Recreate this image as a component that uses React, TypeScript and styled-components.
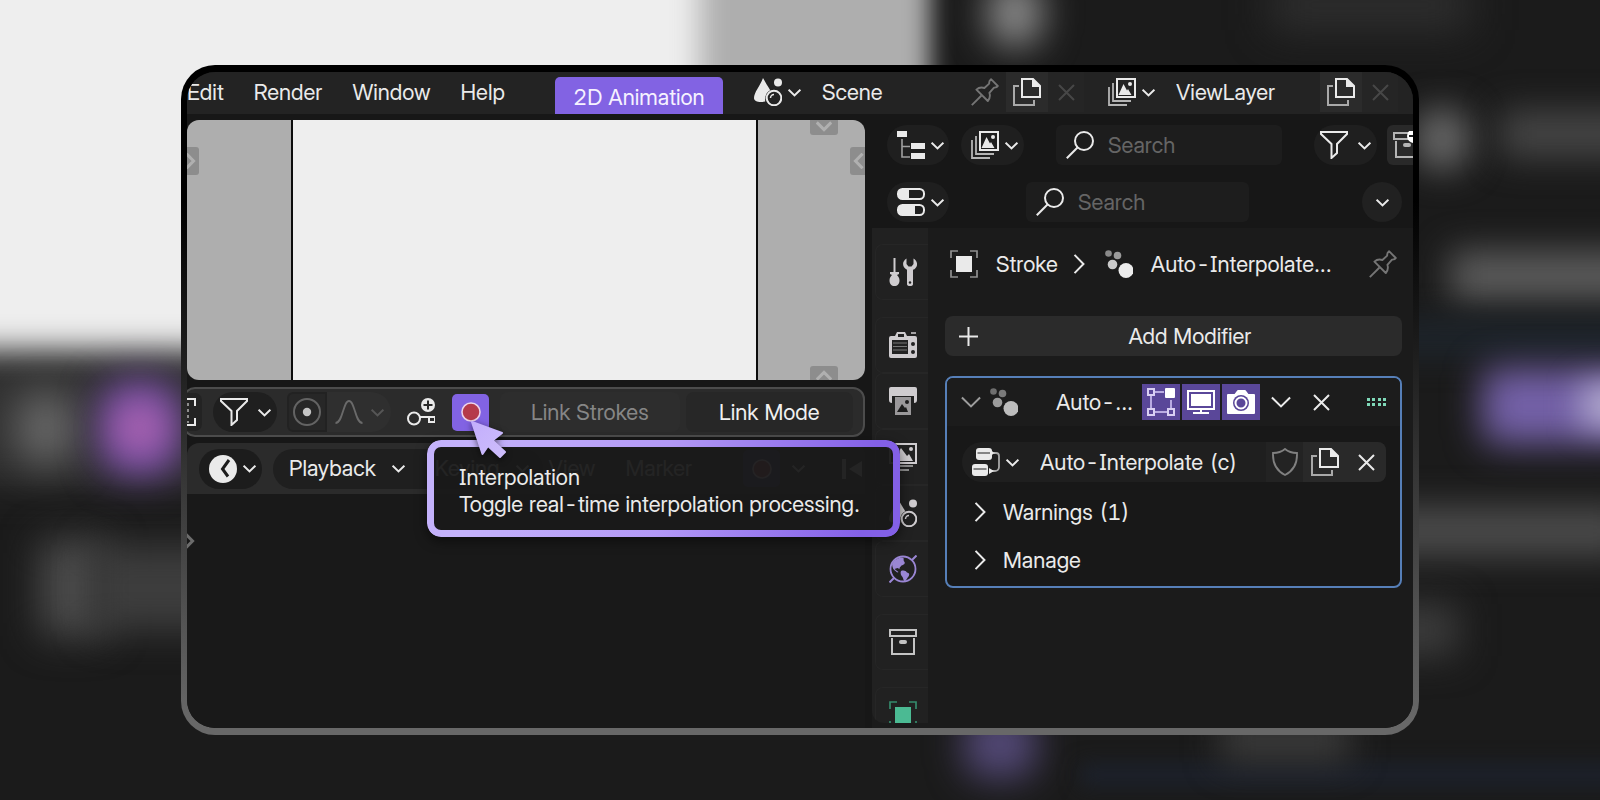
import React from "react";
import styled, { createGlobalStyle, css } from "styled-components";

const GlobalStyle = createGlobalStyle`
  *, *::before, *::after { box-sizing: border-box; }
  body {
    margin: 0;
    background: #1a1a1a;
    color: #eaeaea;
    font: 400 22px/27px "Inter Display", Inter, "Liberation Sans", sans-serif;
    font-feature-settings: "tnum", "cv08";
  }
  button, input { font: inherit; font-feature-settings: inherit; color: inherit; }
  button { margin: 0; padding: 0; border: 0; background: none; cursor: pointer; white-space: nowrap; }
  svg { display: block; flex: none; }
`;

/* ---------- Stage and blurred backdrop ---------- */

const Stage = styled.main`
  position: relative;
  isolation: isolate;
  display: flex;
  min-height: 100vh;
  padding: 65px 181px;
  overflow: hidden;
`;

const Backdrop = styled.div`
  position: absolute;
  inset: 0;
  z-index: -1;
  background: #1b1b1b;
`;

interface BlobProps {
  $x: number;
  $y: number;
  $w: number;
  $h: number;
  $color: string;
  $blur?: number;
  $round?: number;
}

const Blob = styled.div<BlobProps>`
  position: absolute;
  left: ${(p) => p.$x}px;
  top: ${(p) => p.$y}px;
  width: ${(p) => p.$w}px;
  height: ${(p) => p.$h}px;
  border-radius: ${(p) => p.$round ?? 0}px;
  background: ${(p) => p.$color};
  filter: blur(${(p) => p.$blur ?? 18}px);
`;

const Frame = styled.div`
  display: flex;
  flex: 1;
  min-width: 0;
  padding: 7px 6px;
  border-radius: 34px;
  background: linear-gradient(#000 0%, #000 20%, #1c1c1c 42%, #444 72%, #686868 98%);
`;

const AppWindow = styled.div`
  display: flex;
  flex: 1;
  flex-direction: column;
  gap: 6px;
  min-width: 0;
  border-radius: 28px;
  overflow: hidden;
  background: #171717;
`;

/* ---------- Top bar ---------- */

const TopBar = styled.header`
  display: flex;
  align-items: flex-start;
  height: 42px;
  padding-right: 15px;
  background: #232323;
`;

const MenuBar = styled.nav`
  display: flex;
  gap: 30px;
  height: 40px;
  align-items: center;
`;

const WorkspaceTab = styled.button`
  align-self: flex-end;
  width: 168px;
  height: 37px;
  margin: 0 31px 0 50px;
  border-radius: 5px 5px 0 0;
  background: #8263e3;
  color: #f6f2ff;
  padding-top: 3px;
`;

const IdSelector = styled.div<{ $grow?: boolean }>`
  display: flex;
  align-items: center;
  height: 40px;
  flex: ${(p) => (p.$grow ? "1 1 0" : "none")};
  margin-left: ${(p) => (p.$grow ? 0 : 24)}px;
  min-width: 0;
`;

const NameInput = styled.input`
  flex: 1 1 0;
  width: 144px;
  min-width: 0;
  margin-left: 21px;
  padding: 0;
  border: 0;
  outline: 0;
  background: none;
`;

const IconButton = styled.button<{ $w?: number; $bg?: string }>`
  display: flex;
  align-items: center;
  justify-content: center;
  flex: none;
  align-self: stretch;
  width: ${(p) => p.$w ?? 40}px;
  background: ${(p) => p.$bg ?? "none"};
`;

const PinControl = styled(IconButton)`
  color: #757575;
`;

const DisabledClose = styled(IconButton)`
  background: #252525;
  color: #474747;
`;

const DropButton = styled.button<{ $bg?: string; $w?: number; $gap?: number }>`
  display: flex;
  align-items: center;
  justify-content: center;
  gap: ${(p) => p.$gap ?? 6}px;
  flex: none;
  width: ${(p) => (p.$w ? `${p.$w}px` : "auto")};
  height: 40px;
  padding-left: ${(p) => (p.$w && !p.$gap ? 4 : 0)}px;
  border-radius: 20px;
  background: ${(p) => p.$bg ?? "none"};
`;

/* ---------- Editors ---------- */

const Workspace = styled.div`
  display: grid;
  grid-template-columns: minmax(0, 685fr) minmax(0, 541fr);
  flex: 1;
`;

const LeftPane = styled.section`
  display: flex;
  flex-direction: column;
  padding-right: 7px;
`;

const Viewport = styled.div`
  position: relative;
  display: grid;
  grid-template-columns: 104fr 467fr 107fr;
  height: 260px;
  border-radius: 12px;
  overflow: hidden;
  background: #aeaeae;
`;

const Canvas = styled.div`
  grid-column: 2;
  border: solid #0c0c0c;
  border-width: 0 2px;
  background: #eee;
`;

const handlePlaces = {
  left: css`left: -16px; top: 27px; padding-left: 10px;`,
  right: css`right: -13px; top: 27px; padding-right: 10px;`,
  top: css`right: 27px; top: -13px; padding-top: 9px;`,
  bottom: css`right: 27px; bottom: -14px; padding-bottom: 8px;`,
};

const RegionHandle = styled.button<{ $place: keyof typeof handlePlaces }>`
  position: absolute;
  display: flex;
  align-items: center;
  justify-content: center;
  width: 28px;
  height: 28px;
  border-radius: 3px;
  background: #8d8d8d;
  color: #b0b0b0;
  ${(p) => handlePlaces[p.$place]}
`;

const ToolHeader = styled.div`
  display: flex;
  align-items: center;
  height: 50px;
  margin: 7px 0 6px -4px;
  padding-right: 10px;
  border: 2px solid #4c4c4c;
  border-radius: 12px;
  background: #2b2b2b;
`;

const ClippedTool = styled.button`
  display: flex;
  justify-content: flex-end;
  align-items: center;
  width: 17px;
  height: 38px;
  margin-right: 11px;
  padding-right: 6px;
  overflow: hidden;
  border-radius: 0 7px 7px 0;
  background: #232323;
`;

const ToggleGroup = styled.div`
  display: flex;
  height: 40px;
  margin: 0 8px 0 10px;
  border-radius: 6px 20px 20px 6px;
  background: #2f2f2f;
  color: #565656;
`;

const FalloffToggle = styled.button`
  display: flex;
  align-items: center;
  justify-content: center;
  width: 40px;
  border: 2px solid #222;
  border-radius: 6px 0 0 6px;
  background: #272727;
`;

const RecordAnchor = styled.div`
  position: relative;
  z-index: 5;
  margin: 0 11px 0 10px;
`;

const RecordButton = styled.button`
  display: flex;
  align-items: center;
  justify-content: center;
  width: 37px;
  height: 37px;
  border-radius: 5px;
  background: #8263e3;
`;

const LinkButton = styled.button<{ $grow: number; $muted?: boolean }>`
  flex: ${(p) => p.$grow} 1 0;
  height: 40px;
  margin-left: ${(p) => (p.$muted ? 0 : 6)}px;
  border-radius: 8px;
  color: ${(p) => (p.$muted ? "#868686" : "#f0f0f0")};
  background: ${(p) => (p.$muted ? "#2d2d2d" : "#272727")};
`;

const Tooltip = styled.div`
  position: absolute;
  left: -25px;
  top: 46px;
  width: 473px;
  padding: 24px 30px 19px 32px;
  border-radius: 14px;
  background: rgba(25, 25, 25, 0.95);
  box-shadow: 0 4px 12px rgba(0, 0, 0, 0.5);
  white-space: nowrap;

  &::before {
    content: "";
    position: absolute;
    inset: 0;
    padding: 7px;
    border-radius: inherit;
    background: linear-gradient(100deg, #c4b2fb 10%, #b399f6 50%, #8360e6 92%);
    mask: linear-gradient(#000 0 0) content-box exclude, linear-gradient(#000 0 0);
  }
  p { margin: 0; }
`;

const Cursor = styled.svg`
  position: absolute;
  left: 15px;
  top: 24px;
  filter: drop-shadow(0 2px 3px rgba(0, 0, 0, 0.55));
  pointer-events: none;
`;

const TimelineHeader = styled.div`
  display: flex;
  align-items: center;
  height: 51px;
  padding-left: 12px;
  border-radius: 12px 12px 0 0;
  background: #2b2b2b;
`;

const MenuPill = styled.div`
  display: flex;
  margin-left: 11px;
  border-radius: 20px;
  background: #1f1f1f;
`;

const PillMenu = styled.button`
  display: flex;
  align-items: center;
  gap: 16px;
  height: 40px;
  padding: 0 14px 0 16px;
`;

const PlainMenus = styled.div`
  display: flex;
  flex: 1;
  gap: 30px;
  margin-left: 6px;
`;

const Transport = styled.div`
  display: flex;
  align-items: center;
  gap: 12px;
  margin-right: 2px;
`;

const KeyToggle = styled(RecordButton)`
  background: #463d78;
`;

const JumpStart = styled.button`
  margin-left: 25px;
`;

const Timeline = styled.div`
  flex: 1;
  padding-top: 34px;
  background: #191919;
  color: #6c6c6c;
`;

const ExpandButton = styled.button`
  margin-left: -6px;
`;

/* ---------- Outliner and properties ---------- */

const RightPane = styled.section`
  display: flex;
  flex-direction: column;
  min-width: 0;
`;

const EditorHeader = styled.div`
  display: flex;
  align-items: center;
  height: 50px;
  margin-bottom: 7px;
  padding: 0 11px 0 15px;
  &:nth-child(2) { margin-bottom: 1px; }
`;

const SearchField = styled.label<{ $gap: [number, number]; $width?: number }>`
  display: flex;
  align-items: center;
  gap: 14px;
  flex: ${(p) => (p.$width ? `0 1 ${p.$width}px` : "1 1 0")};
  min-width: 0;
  height: 40px;
  margin: 0 ${(p) => p.$gap[1]}px 0 ${(p) => p.$gap[0]}px;
  padding-left: 10px;
  border-radius: 6px;
  background: #1d1d1d;

  input {
    flex: 1;
    min-width: 0;
    padding: 0;
    border: 0;
    outline: 0;
    background: none;
  }
  input::placeholder { color: #656565; opacity: 1; }
`;

const NewCollection = styled(IconButton)`
  height: 40px;
  align-self: center;
  margin: 0 -25px 0 10px;
  border-radius: 6px;
  color: #b4b4b4;
`;

const OptionsButton = styled(IconButton)`
  height: 40px;
  align-self: center;
  margin-left: auto;
  border-radius: 20px;
`;

const DisplayMode = styled(DropButton)`
  margin-left: 12px;
`;

const Properties = styled.div`
  display: flex;
  flex: 1;
  background: #1b1b1b;
`;

const TabRail = styled.nav`
  display: flex;
  flex-direction: column;
  width: 56px;
  height: 495px;
  padding: 16px 0 0 3px;
  overflow: hidden;
  border-radius: 0 0 0 12px;
  background: #212121;
`;

const RailTab = styled.button<{ $apart?: boolean; $color?: string }>`
  flex: none;
  display: flex;
  align-items: center;
  height: 56px;
  padding-left: 13px;
  margin-top: ${(p) => (p.$apart ? 17 : 0)}px;
  border: 1px solid #262626;
  border-right: 0;
  border-radius: 8px 0 0 8px;
  color: ${(p) => p.$color ?? "#cfcccf"};
`;

const PropertyBody = styled.div`
  flex: 1;
  min-width: 0;
  padding: 16px 11px 0 17px;
`;

const Breadcrumb = styled.div`
  display: flex;
  align-items: center;
  height: 40px;
  padding: 0 5px;
`;

const Crumb = styled.span`
  display: flex;
  align-items: center;
  gap: 18px;
`;

const CrumbArrow = styled.span`
  padding: 0 16px 0 11px;
`;

const PinButton = styled.button`
  margin-left: auto;
  color: #757575;
`;

const AddModifier = styled.button`
  display: flex;
  align-items: center;
  width: 100%;
  height: 40px;
  margin: 32px 0 20px;
  padding-left: 14px;
  border-radius: 8px;
  background: #2b2b2b;

  span { flex: 1; }
`;

const ModifierPanel = styled.article`
  border: 2px solid #567fb8;
  border-radius: 8px;
  background: #181818;
  overflow: hidden;
`;

const ModifierHeader = styled.div`
  display: flex;
  align-items: center;
  height: 48px;
  padding: 0 14px 0 14px;
  background: #1c1c1c;
`;

const CollapseButton = styled.button`
  margin-right: 9px;
  color: #9c9c9c;
`;

const ModifierName = styled.span`
  flex: 1;
  min-width: 0;
  margin-left: 38px;
`;

const ModeButtons = styled.div`
  display: flex;
  gap: 2px;
`;

const ModeButton = styled.button`
  display: flex;
  align-items: center;
  justify-content: center;
  width: 38px;
  height: 36px;
  background: #5a4799;
  color: #fff;
`;

const GripButton = styled.button`
  margin-left: 25px;
`;

const NodeGroup = styled.div`
  display: flex;
  align-items: center;
  height: 40px;
  margin: 16px 14px 10px 15px;
  border-radius: 20px 8px 8px 20px;
  overflow: hidden;
  background: #1f1f1f;
`;

const NodeName = styled(NameInput)`
  margin-left: 16px;
`;

const SubPanel = styled.button`
  display: flex;
  align-items: center;
  gap: 13px;
  width: 100%;
  height: 40px;
  padding-left: 23px;
  margin-bottom: 8px;
  &:last-child { margin-bottom: 6px; }
`;

/* ---------- Icons, drawn on a 28px grid ---------- */

type Dir = "down" | "up" | "left" | "right";

const turns: Record<Dir, number> = { down: 0, left: 90, up: 180, right: 270 };

function Chevron({ dir = "down", size = 13, weight = 2 }: { dir?: Dir; size?: number; weight?: number }) {
  return (
    <svg width={size} height={size} viewBox="0 0 13 13" fill="none" stroke="currentColor" strokeWidth={(weight * 13) / size} aria-hidden>
      <path d="M.6 3.6 6.5 9.4l5.900-5.800" transform={`rotate(${turns[dir]} 6.5 6.5)`} />
    </svg>
  );
}

function Icon({ children, color = "currentColor", size = 28 }: { children: React.ReactNode; color?: string; size?: number }) {
  return (
    <svg width={size} height={size} viewBox="0 0 28 28" fill="none" stroke={color} strokeWidth="2" color={color} aria-hidden>
      {children}
    </svg>
  );
}

const SceneIcon = () => (
  <Icon>
    <path d="M9 0c2.500 4.500 5 8.500 7.200 12.200C12.600 14 10.800 17.500 11.200 23.500 6 24.500 0 24 0 20 0 14.500 6 8 9 0Z" fill="currentColor" stroke="none" />
    <circle cx="24" cy="4.500" r="4" fill="currentColor" stroke="none" />
    <circle cx="20" cy="20" r="7.300" />
    <path d="M16.500 20a3.500 3.500 0 0 1 3.500-3.500" strokeWidth="1.500" />
  </Icon>
);

const PinIcon = () => (
  <Icon>
    <path d="M20 1.200 26.800 8c-.8 1.600-2.300 1.700-3.800 1.600l-4.600 5.200c1 3.200.4 6-1.600 8.200L5.400 11.600c2.200-2 5-2.600 8-1.600l4.800-4.400c-.2-1.600.2-3.200 1.800-4.400Z" strokeWidth="1.900" strokeLinejoin="round" />
    <path d="M10.500 17.500.8 27.200" strokeWidth="1.900" />
  </Icon>
);

const CopyIcon = () => (
  <Icon>
    <path d="M6 8H1v19h20v-5" stroke="#a9a9a9" />
    <path d="M9 1h11l7 7v11H9Z" />
    <path d="M19 0v9h9Z" fill="currentColor" stroke="none" />
  </Icon>
);

const CloseIcon = () => (
  <svg width="17" height="17" viewBox="0 0 17 17" stroke="currentColor" strokeWidth="2" aria-hidden>
    <path d="m1 1 15 15M16 1 1 16" />
  </svg>
);

const ImagesIcon = () => (
  <Icon>
    <path d="M1 9v18h18M5 5v18h18" stroke="#b5b5b5" strokeWidth="1.800" />
    <path d="M9 1h18v18H9Z" />
    <path d="m10.500 17 5-11L19 12.500l1-1.500 3.500 6Z" fill="currentColor" stroke="none" />
    <circle cx="22" cy="6" r="2" fill="currentColor" stroke="none" />
  </Icon>
);

const OutlinerIcon = () => (
  <Icon>
    <path d="M5 8v18h8M5 15.500h8" stroke="#a0a0a0" strokeWidth="1.600" />
    <path d="M0 0h10v6H0ZM14 12h14v6H14ZM14 22h14v6H14Z" fill="currentColor" stroke="none" />
  </Icon>
);

const PropertiesIcon = () => (
  <Icon>
    <rect x="1" y="1" width="26" height="10" rx="4.500" />
    <rect x="1" y="17" width="26" height="10" rx="4.500" />
    <path d="M5 1h7v10H5a4 4 0 0 1-4-4V5a4 4 0 0 1 4-4ZM5 17h13v10H5a4 4 0 0 1-4-4v-2a4 4 0 0 1 4-4Z" fill="currentColor" stroke="none" />
  </Icon>
);

const SearchIcon = () => (
  <Icon>
    <circle cx="18" cy="10" r="9" />
    <path d="M11.500 16.500.8 27.200" />
  </Icon>
);

const FilterIcon = () => (
  <Icon>
    <path d="M1 1h26v2L17 13v9l-5.500 5V13L1 3Z" />
  </Icon>
);

const ArchiveIcon = ({ plus }: { plus?: boolean }) => (
  <Icon>
    <path d="M1 2h26v6H1Z" />
    <path d="M3 10v16h22V10" />
    <rect x="10" y="12" width="8" height="4" rx="2" fill="currentColor" stroke="none" />
    {plus && <circle cx="21" cy="5" r="7" fill="#fff" stroke="none" />}
    {plus && <path d="M16 5h10M21 0v10" stroke="#222" />}
  </Icon>
);

const ToolIcon = () => (
  <Icon>
    <path d="M5.500 0v14" />
    <path d="M1 14h9v2l-2 1c1.500 1.500 2.500 3 2.500 5.500 0 3.500-2 5.500-5 5.500s-5-2-5-5.500c0-2.500 1-4 2.500-5.500l-2-1Z" fill="currentColor" stroke="none" />
    <path d="M17.500.5c-6 4-3 10 .5 11.200V26c0 1.500 1 2 3 2s3-.5 3-2V11.700c4-1.200 6.500-7.200.5-11.200V6l-2 2.500h-3L17.500 6Z" fill="currentColor" stroke="none" />
    <circle cx="21" cy="24.500" r="1.200" fill="#222" stroke="none" />
  </Icon>
);

const RenderIcon = () => (
  <Icon>
    <path d="M2 5h4l2-4h8l2 4h8a2 2 0 0 1 2 2v18a2 2 0 0 1-2 2H2a2 2 0 0 1-2-2V7a2 2 0 0 1 2-2Z" fill="currentColor" stroke="none" />
    <path d="M22 2h5" strokeWidth="1.500" />
    <path d="M9 3h6v3H9ZM3 9h16v14H3Z" fill="#222" stroke="none" />
    <path d="M4 12h14M4 15.500h14M4 19h14" stroke="#777" strokeWidth="1" />
    <circle cx="24" cy="13" r="2" fill="#222" stroke="none" />
    <circle cx="24" cy="21" r="2" fill="#222" stroke="none" />
  </Icon>
);

const OutputIcon = () => (
  <Icon>
    <path d="M2 0h24a2 2 0 0 1 2 2v11c0 2-1 3-3 3V9H3v7c-2 0-3-1-3-3V2a2 2 0 0 1 2-2Z" fill="currentColor" stroke="none" />
    <path d="M6 10h16v18H6Z" fill="#9a989a" stroke="none" />
    <path d="m8 25 5-8 3 4 1-1 2 5Z" fill="#1c1c1c" stroke="none" />
    <circle cx="18" cy="15" r="2" fill="#1c1c1c" stroke="none" />
  </Icon>
);

const ViewLayerIcon = () => (
  <Icon>
    <path d="M1 1h26v19H1Z" />
    <path d="m4 18 8-13 6 8 2-2 4 7Z" fill="currentColor" stroke="none" />
    <circle cx="22" cy="6" r="2" fill="currentColor" stroke="none" />
    <path d="M5 23h19M8 27h12" stroke="#b0b0b0" strokeWidth="1.600" />
  </Icon>
);

const WorldIcon = () => (
  <Icon>
    <circle cx="14" cy="14" r="12.500" strokeWidth="1.800" />
    <path d="M.5 27.500 5 23M23 5 27.500.5" />
    <path d="M3 9c3-6 9-7 11.500-6 .5 1.500-.5 2.500 1 4 1 1.500-1 3-3 3.500-1 1.500-2 1.500-2 3.500l-2-1-3 1 4 3c-1 1-2 0-3-1-2-1-3-3-3.500-7ZM12 16c3-1 5 0 6 1.500 2 .5 3 1.500 1.500 4-1.500 1.500-2 3.500-3.500 5-2-1-1.500-3-2.500-4.500C12 20.500 11 18 12 16Z" fill="currentColor" stroke="none" />
  </Icon>
);

const ObjectIcon = ({ corner = "#8f8f8f" }: { corner?: string }) => (
  <Icon>
    <path d="M1 8V1h7M20 1h7v7M27 20v7h-7M8 27H1v-7" stroke={corner} strokeWidth="1.700" />
    <rect x="6" y="6" width="16" height="16" fill="currentColor" stroke="none" />
  </Icon>
);

const ParticlesIcon = ({ dim }: { dim?: boolean }) => (
  <Icon>
    <g stroke="none">
      <circle cx="3.500" cy="3.500" r="3.300" fill={dim ? "#6e6e6e" : "#8a8a8a"} />
      <circle cx="12.500" cy="5.500" r="3.800" fill={dim ? "#7a7a7a" : "#9a9a9a"} />
      <circle cx="7.500" cy="14.500" r="4.800" fill={dim ? "#9c9c9c" : "#cacaca"} />
      <circle cx="21" cy="20.500" r="7.500" fill={dim ? "#bdbdbd" : "#ececec"} />
    </g>
  </Icon>
);

const NodeTreeIcon = () => (
  <Icon>
    <rect x="4" y="0" width="16" height="12" rx="3" fill="currentColor" stroke="none" />
    <rect x="0" y="16" width="16" height="12" rx="3" fill="currentColor" stroke="none" />
    <path d="M5.500 5h13M1.500 21h13" stroke="#1f1f1f" strokeWidth="1" />
    <path d="M22 5h2a3 3 0 0 1 3 3v11a4 4 0 0 1-4 4h-3" stroke="#a8a8a8" strokeWidth="1.800" />
    <path d="M18 2v6l5-3ZM17 20v6l5-3Z" fill="currentColor" stroke="none" />
  </Icon>
);

const ProportionalIcon = () => (
  <Icon>
    <circle cx="14" cy="14" r="13" stroke="#636363" />
    <circle cx="14" cy="14" r="4.200" fill="#c4c4c4" stroke="none" />
  </Icon>
);

const FalloffIcon = () => (
  <Icon>
    <path d="M.5 25C8 25 8 3 14 3s6 22 13.500 22" stroke="#6a6a6a" strokeWidth="1.800" />
  </Icon>
);

const KeyAddIcon = () => (
  <Icon>
    <circle cx="7" cy="20.500" r="6" />
    <path d="M13 19h15v6" />
    <path d="M22 20v4h6" />
    <circle cx="21" cy="7" r="7" fill="currentColor" stroke="none" />
    <path d="M16.500 7h9M21 2.500v9" stroke="#2a2a2a" />
  </Icon>
);

const SnapIcon = () => (
  <Icon>
    <path d="M19 1h8v7M27 20v7h-8M1 8V1h7M8 27H1v-7" />
    <path d="M20 5v20" strokeDasharray="3 3" stroke="#8d8d8d" />
  </Icon>
);

const RecordIcon = () => (
  <Icon size={22}>
    <circle cx="14" cy="14" r="11.500" fill="#b53a4b" stroke="#ecd3ea" />
  </Icon>
);

const ClockIcon = () => (
  <Icon>
    <circle cx="14" cy="14" r="14" fill="currentColor" stroke="none" />
    <path d="M20 5 13.500 14l5.500 7.500" stroke="#1c1c1c" strokeWidth="3" />
  </Icon>
);

const EditModeIcon = () => (
  <Icon>
    <path d="M8 4h9M4 8v12M24 12v8M8 24h12" stroke="#b9abe2" />
    <path d="M1 1h6v6H1ZM1 21h6v6H1ZM21 21h6v6h-6Z" stroke="#d9cff3" />
    <rect x="18" y="0" width="10" height="10" rx="1" fill="currentColor" stroke="none" />
  </Icon>
);

const DisplayIcon = () => (
  <Icon>
    <path d="M1 3h26v18H1Z" />
    <path d="M4 6h20v12H4Z" fill="currentColor" stroke="none" />
    <path d="M14 21v4M6 25h16" />
  </Icon>
);

const CameraIcon = () => (
  <Icon>
    <path d="M1 7h7l3-4h7l3 4h6v18H1Z" fill="currentColor" stroke="currentColor" strokeLinejoin="round" />
    <circle cx="14" cy="15" r="8" fill="#5a4799" stroke="none" />
    <circle cx="14" cy="15" r="5.500" />
  </Icon>
);

const ShieldIcon = () => (
  <Icon color="#808080">
    <path d="M14 1c3.500 3 7.500 4 12 4 .5 11-4 18-12 22C6 23 1.500 16 2 5c4.500 0 8.500-1 12-4Z" strokeWidth="1.800" />
  </Icon>
);

const PlusIcon = () => (
  <svg width="19" height="19" viewBox="0 0 19 19" stroke="currentColor" strokeWidth="2" aria-hidden>
    <path d="M9.500 0v19M0 9.500h19" />
  </svg>
);

const JumpIcon = () => (
  <svg width="21" height="20" viewBox="0 0 21 20" fill="currentColor" aria-hidden>
    <path d="M0 0h4v20H0ZM20 2v16L7 10Z" />
  </svg>
);

const GripIcon = () => (
  <svg width="19" height="8" viewBox="0 0 19 8" fill="#7fd8b8" aria-hidden>
    {[0, 5, 11, 16].map((x) => (
      <g key={x}>
        <rect x={x} y="0" width="3" height="3" />
        <rect x={x} y="5" width="3" height="3" />
      </g>
    ))}
  </svg>
);

/* ---------- Page ---------- */

const blobs: BlobProps[] = [
  { $x: -80, $y: 330, $w: 800, $h: 156, $color: "#303030", $blur: 18 },
  { $x: 640, $y: -60, $w: 290, $h: 410, $color: "#aeaeae", $blur: 12 },
  { $x: -80, $y: -80, $w: 780, $h: 430, $color: "#eee", $blur: 15 },
  { $x: 16, $y: 392, $w: 60, $h: 72, $color: "#686868", $blur: 20, $round: 24 },
  { $x: 100, $y: 380, $w: 80, $h: 96, $color: "#6f4b9e", $blur: 19, $round: 24 },
  { $x: 112, $y: 400, $w: 56, $h: 56, $color: "#a862b0", $blur: 17, $round: 28 },
  { $x: 40, $y: 540, $w: 66, $h: 96, $color: "#4c4c4c", $blur: 19 },
  { $x: 90, $y: 545, $w: 150, $h: 86, $color: "#3d3d3d", $blur: 18 },
  { $x: 988, $y: -20, $w: 54, $h: 66, $color: "#8a8a8a", $blur: 18, $round: 20 },
  { $x: 1270, $y: -20, $w: 200, $h: 50, $color: "#2e2e2e", $blur: 20 },
  { $x: 1414, $y: 108, $w: 56, $h: 62, $color: "#666", $blur: 17, $round: 24 },
  { $x: 1500, $y: 110, $w: 150, $h: 48, $color: "#454545", $blur: 17 },
  { $x: 1450, $y: 250, $w: 230, $h: 52, $color: "#5a5a5a", $blur: 17 },
  { $x: 1380, $y: 316, $w: 280, $h: 44, $color: "#1d2329", $blur: 14 },
  { $x: 1482, $y: 368, $w: 200, $h: 76, $color: "#7461a8", $blur: 18, $round: 12 },
  { $x: 1582, $y: 384, $w: 70, $h: 42, $color: "#b5aed0", $blur: 16 },
  { $x: 1360, $y: 506, $w: 270, $h: 50, $color: "#4b4b4b", $blur: 17 },
  { $x: 1360, $y: 604, $w: 98, $h: 52, $color: "#3c3c3c", $blur: 18 },
  { $x: 1080, $y: 764, $w: 600, $h: 22, $color: "#1c212c", $blur: 10 },
  { $x: 964, $y: 710, $w: 72, $h: 68, $color: "#524875", $blur: 18, $round: 20 },
  { $x: 1220, $y: 716, $w: 130, $h: 46, $color: "#3a3a3a", $blur: 17 },
];

const railTabs: { label: string; icon: React.ReactNode; apart?: boolean; color?: string }[] = [
  { label: "Tool", icon: <ToolIcon /> },
  { label: "Render", icon: <RenderIcon />, apart: true },
  { label: "Output", icon: <OutputIcon /> },
  { label: "View Layer", icon: <ViewLayerIcon /> },
  { label: "Scene", icon: <SceneIcon /> },
  { label: "World", icon: <WorldIcon />, color: "#9a86d4" },
  { label: "Collection", icon: <ArchiveIcon />, apart: true, color: "#c4c4c4" },
  { label: "Object", icon: <ObjectIcon corner="#348a6c" />, apart: true, color: "#4bba93" },
];

function IdBlock({ name, label, icon, pin }: { name: string; label: string; icon: React.ReactNode; pin?: boolean }) {
  return (
    <IdSelector $grow={pin}>
      <DropButton aria-label={`Browse ${label}`}>
        {icon}
        <Chevron />
      </DropButton>
      <NameInput aria-label={label} defaultValue={name} />
      {pin && (
        <PinControl $w={42} aria-label="Pin scene">
          <PinIcon />
        </PinControl>
      )}
      <IconButton $w={42} $bg="#2b2b2b" aria-label={`New ${label}`}>
        <CopyIcon />
      </IconButton>
      <DisabledClose aria-label={`Remove ${label}`} $w={36}>
        <CloseIcon />
      </DisabledClose>
    </IdSelector>
  );
}

export default function App() {
  return (
    <>
      <GlobalStyle />
      <Stage>
        <Backdrop aria-hidden>
          {blobs.map((b, i) => (
            <Blob key={i} {...b} />
          ))}
        </Backdrop>
        <Frame>
          <AppWindow>
            <TopBar>
              <MenuBar>
                {["Edit", "Render", "Window", "Help"].map((m) => (
                  <button key={m}>{m}</button>
                ))}
              </MenuBar>
              <WorkspaceTab>2D Animation</WorkspaceTab>
              <IdBlock name="Scene" label="Scene" icon={<SceneIcon />} pin />
              <IdBlock name="ViewLayer" label="View layer" icon={<ImagesIcon />} />
            </TopBar>

            <Workspace>
              <LeftPane>
                <Viewport>
                  <Canvas />
                  <RegionHandle $place="left" aria-label="Show toolbar"><Chevron dir="right" size={16} weight={3} /></RegionHandle>
                  <RegionHandle $place="right" aria-label="Show sidebar"><Chevron dir="left" size={16} weight={3} /></RegionHandle>
                  <RegionHandle $place="top" aria-label="Show header"><Chevron size={16} weight={3} /></RegionHandle>
                  <RegionHandle $place="bottom" aria-label="Show asset shelf"><Chevron dir="up" size={16} weight={3} /></RegionHandle>
                </Viewport>

                <ToolHeader>
                  <ClippedTool aria-label="Multiframe"><SnapIcon /></ClippedTool>
                  <DropButton $w={64} $gap={10} $bg="#1f1f1f" aria-label="Filter">
                    <FilterIcon />
                    <Chevron />
                  </DropButton>
                  <ToggleGroup>
                    <FalloffToggle aria-label="Proportional editing"><ProportionalIcon /></FalloffToggle>
                    <DropButton $w={64} $gap={8} aria-label="Falloff">
                      <FalloffIcon />
                      <Chevron />
                    </DropButton>
                  </ToggleGroup>
                  <IconButton $w={43} aria-label="Insert keyframe"><KeyAddIcon /></IconButton>
                  <RecordAnchor>
                    <RecordButton aria-label="Interpolation" aria-describedby="interpolation-tip"><RecordIcon /></RecordButton>
                    <Tooltip role="tooltip" id="interpolation-tip">
                      <p>Interpolation</p>
                      <p>Toggle real-time interpolation processing.</p>
                    </Tooltip>
                    <Cursor width="42" height="42" viewBox="0 0 42 42" aria-hidden>
                      <defs>
                        <linearGradient id="cursorFill" x1="0" y1="0" x2="1" y2="1">
                          <stop offset="0" stopColor="#c3aefc" />
                          <stop offset="1" stopColor="#cdbdfb" />
                        </linearGradient>
                      </defs>
                      <path d="M5 4 35 15 25.500 22.500 38 34 33 39 21 28 15.500 36Z" fill="url(#cursorFill)" stroke="url(#cursorFill)" strokeWidth="2" strokeLinejoin="round" />
                    </Cursor>
                  </RecordAnchor>
                  <LinkButton $grow={178} $muted>Link Strokes</LinkButton>
                  <LinkButton $grow={166}>Link Mode</LinkButton>
                </ToolHeader>

                <TimelineHeader>
                  <DropButton $w={63} $bg="#1c1c1c" aria-label="Editor type">
                    <ClockIcon />
                    <Chevron />
                  </DropButton>
                  <MenuPill>
                    <PillMenu>Playback<Chevron /></PillMenu>
                    <PillMenu>Keying<Chevron /></PillMenu>
                  </MenuPill>
                  <PlainMenus>
                    <button>View</button>
                    <button>Marker</button>
                  </PlainMenus>
                  <Transport>
                    <KeyToggle aria-label="Auto keying"><RecordIcon /></KeyToggle>
                    <Chevron />
                    <JumpStart aria-label="Jump to start"><JumpIcon /></JumpStart>
                  </Transport>
                </TimelineHeader>
                <Timeline>
                  <ExpandButton aria-label="Show channels"><Chevron dir="right" size={16} weight={3} /></ExpandButton>
                </Timeline>
              </LeftPane>

              <RightPane>
                <EditorHeader>
                  <DropButton $w={62} $bg="#1f1f1f" aria-label="Editor type"><OutlinerIcon /><Chevron /></DropButton>
                  <DisplayMode $w={63} $bg="#1f1f1f" aria-label="Display mode"><ImagesIcon /><Chevron /></DisplayMode>
                  <SearchField $gap={[32, 32]}>
                    <SearchIcon />
                    <input type="search" placeholder="Search" aria-label="Search outliner" />
                  </SearchField>
                  <DropButton $w={63} $gap={10} $bg="#1f1f1f" aria-label="Filter"><FilterIcon /><Chevron /></DropButton>
                  <NewCollection $w={40} $bg="#292929" aria-label="New collection"><ArchiveIcon plus /></NewCollection>
                </EditorHeader>
                <EditorHeader>
                  <DropButton $w={62} $bg="#1f1f1f" aria-label="Editor type"><PropertiesIcon /><Chevron /></DropButton>
                  <SearchField $gap={[77, 20]} $width={223}>
                    <SearchIcon />
                    <input type="search" placeholder="Search" aria-label="Search properties" />
                  </SearchField>
                  <OptionsButton $w={40} $bg="#212121" aria-label="Options"><Chevron /></OptionsButton>
                </EditorHeader>

                <Properties>
                  <TabRail>
                    {railTabs.map((t) => (
                      <RailTab key={t.label} aria-label={t.label} $apart={t.apart} $color={t.color}>{t.icon}</RailTab>
                    ))}
                  </TabRail>
                  <PropertyBody>
                    <Breadcrumb>
                      <Crumb><ObjectIcon />Stroke</Crumb>
                      <CrumbArrow><Chevron dir="right" size={20} /></CrumbArrow>
                      <Crumb><ParticlesIcon />Auto-Interpolate...</Crumb>
                      <PinButton aria-label="Pin"><PinIcon /></PinButton>
                    </Breadcrumb>
                    <AddModifier><PlusIcon /><span>Add Modifier</span></AddModifier>
                    <ModifierPanel>
                      <ModifierHeader>
                        <CollapseButton aria-label="Collapse"><Chevron size={20} /></CollapseButton>
                        <ParticlesIcon dim />
                        <ModifierName>Auto-...</ModifierName>
                        <ModeButtons>
                          <ModeButton aria-label="Edit mode"><EditModeIcon /></ModeButton>
                          <ModeButton aria-label="Realtime"><DisplayIcon /></ModeButton>
                          <ModeButton aria-label="Render"><CameraIcon /></ModeButton>
                        </ModeButtons>
                        <IconButton $w={41} aria-label="Modifier options"><Chevron size={20} /></IconButton>
                        <IconButton $w={41} aria-label="Remove modifier"><CloseIcon /></IconButton>
                        <GripButton aria-label="Reorder"><GripIcon /></GripButton>
                      </ModifierHeader>
                      <NodeGroup>
                        <DropButton $w={62} aria-label="Browse node group"><NodeTreeIcon /><Chevron /></DropButton>
                        <NodeName aria-label="Node group" defaultValue="Auto-Interpolate (c)" />
                        <IconButton $w={37} $bg="#232323" aria-label="Fake user"><ShieldIcon /></IconButton>
                        <IconButton $w={43} $bg="#292929" aria-label="Duplicate"><CopyIcon /></IconButton>
                        <IconButton $w={40} $bg="#292929" aria-label="Unlink"><CloseIcon /></IconButton>
                      </NodeGroup>
                      <SubPanel><Chevron dir="right" size={20} />Warnings (1)</SubPanel>
                      <SubPanel><Chevron dir="right" size={20} />Manage</SubPanel>
                    </ModifierPanel>
                  </PropertyBody>
                </Properties>
              </RightPane>
            </Workspace>
          </AppWindow>
        </Frame>
      </Stage>
    </>
  );
}
